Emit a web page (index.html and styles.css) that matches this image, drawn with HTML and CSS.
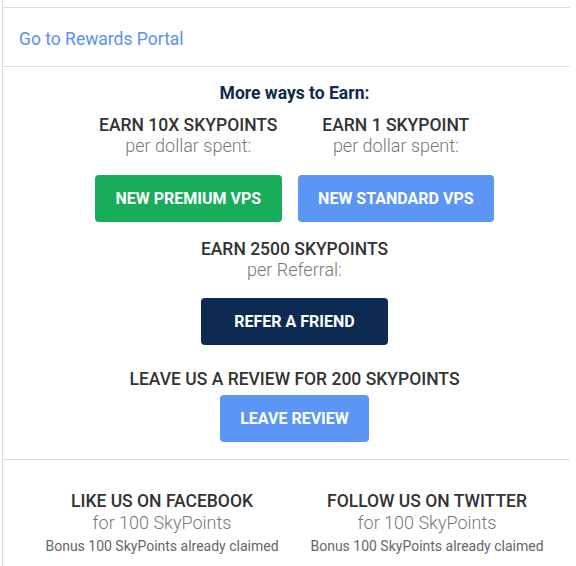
FILE: index.html
```html
<!DOCTYPE html>
<html>
<head>
<meta charset="utf-8">
<link rel="stylesheet" href="styles.css">
</head>
<body>
<div class="panel">
  <div class="spacer"></div>
  <div class="section portal">
    <a class="portal-link" href="#">Go to Rewards Portal</a>
  </div>
  <div class="section earn">
    <div class="earn-title">More ways to Earn:</div>
    <div class="pair">
      <div class="col">
        <div class="head">EARN 10X SKYPOINTS</div>
        <div class="sub">per dollar spent:</div>
        <a class="btn btn-green" href="#">NEW PREMIUM VPS</a>
      </div>
      <div class="col">
        <div class="head">EARN 1 SKYPOINT</div>
        <div class="sub">per dollar spent:</div>
        <a class="btn btn-blue" href="#">NEW STANDARD VPS</a>
      </div>
    </div>
    <div class="col single">
      <div class="head">EARN 2500 SKYPOINTS</div>
      <div class="sub">per Referral:</div>
      <a class="btn btn-navy" href="#">REFER A FRIEND</a>
    </div>
    <div class="col review">
      <div class="head">LEAVE US A REVIEW FOR 200 SKYPOINTS</div>
      <a class="btn btn-blue" href="#">LEAVE REVIEW</a>
    </div>
  </div>
  <div class="section social">
    <div class="social-col">
      <div class="head">LIKE US ON FACEBOOK</div>
      <div class="sub">for 100 SkyPoints</div>
      <div class="note">Bonus 100 SkyPoints already claimed</div>
    </div>
    <div class="social-col">
      <div class="head">FOLLOW US ON TWITTER</div>
      <div class="sub">for 100 SkyPoints</div>
      <div class="note">Bonus 100 SkyPoints already claimed</div>
    </div>
  </div>
</div>
</body>
</html>
```
FILE: styles.css
```css
* { box-sizing: border-box; }
html, body { margin: 0; padding: 0; background: #fff; }
body { font-family: Roboto, "Liberation Sans", Arial, sans-serif; color: #333; }
.panel {
  margin-left: 2px;
  width: 568px;
  height: 566px;
  border-left: 1px solid #dcdcdc;
}
.spacer { height: 7px; }
.section { border-top: 1px solid #dcdcdc; }
.portal { height: 59px; padding: 20px 0 0 16px; }
.portal-link {
  color: #5b8ff3;
  text-decoration: none;
  font-size: 17.5px;
  line-height: 22px;
}
.earn {
  height: 393px;
  padding: 14.5px 0 0 16px;
  display: flex;
  flex-direction: column;
  align-items: center;
}
.earn-title {
  color: #0e2a4f;
  font-weight: 700;
  font-size: 17.5px;
  line-height: 22px;
  margin-bottom: 12.5px;
}
.pair { display: flex; gap: 16px; }
.col { display: flex; flex-direction: column; align-items: stretch; text-align: center; }
.head { font-weight: 500; font-size: 17.5px; line-height: 19px; color: #333; }
.sub { font-weight: 300; font-size: 18px; line-height: 21px; color: #777; }
.btn {
  display: block;
  margin-top: 19px;
  height: 47px;
  line-height: 46px;
  padding: 1px 20.5px 0;
  border-radius: 4px;
  color: #fff;
  text-decoration: none;
  font-weight: 700;
  font-size: 16px;
  text-align: center;
}
.btn-green { background: #17ad5b; }
.btn-blue { background: #5b96f6; }
.btn-navy { background: #0d2b52; padding: 1px 32.5px 0; margin-top: 18.5px; }
.single { margin-top: 17.5px; }
.review { margin-top: 24.8px; align-items: center; }
.review .btn { margin-top: 6.2px; padding: 1px 20px 0; }
.social {
  padding: 30px 0 0 16px;
  display: flex;
  justify-content: center;
  gap: 31px;
}
.social-col { text-align: center; width: 234px; }
.social .head { line-height: 22px; }
.social .sub { line-height: 22px; }
.note { font-size: 14px; font-weight: 400; color: #666; line-height: 24px; }
```
